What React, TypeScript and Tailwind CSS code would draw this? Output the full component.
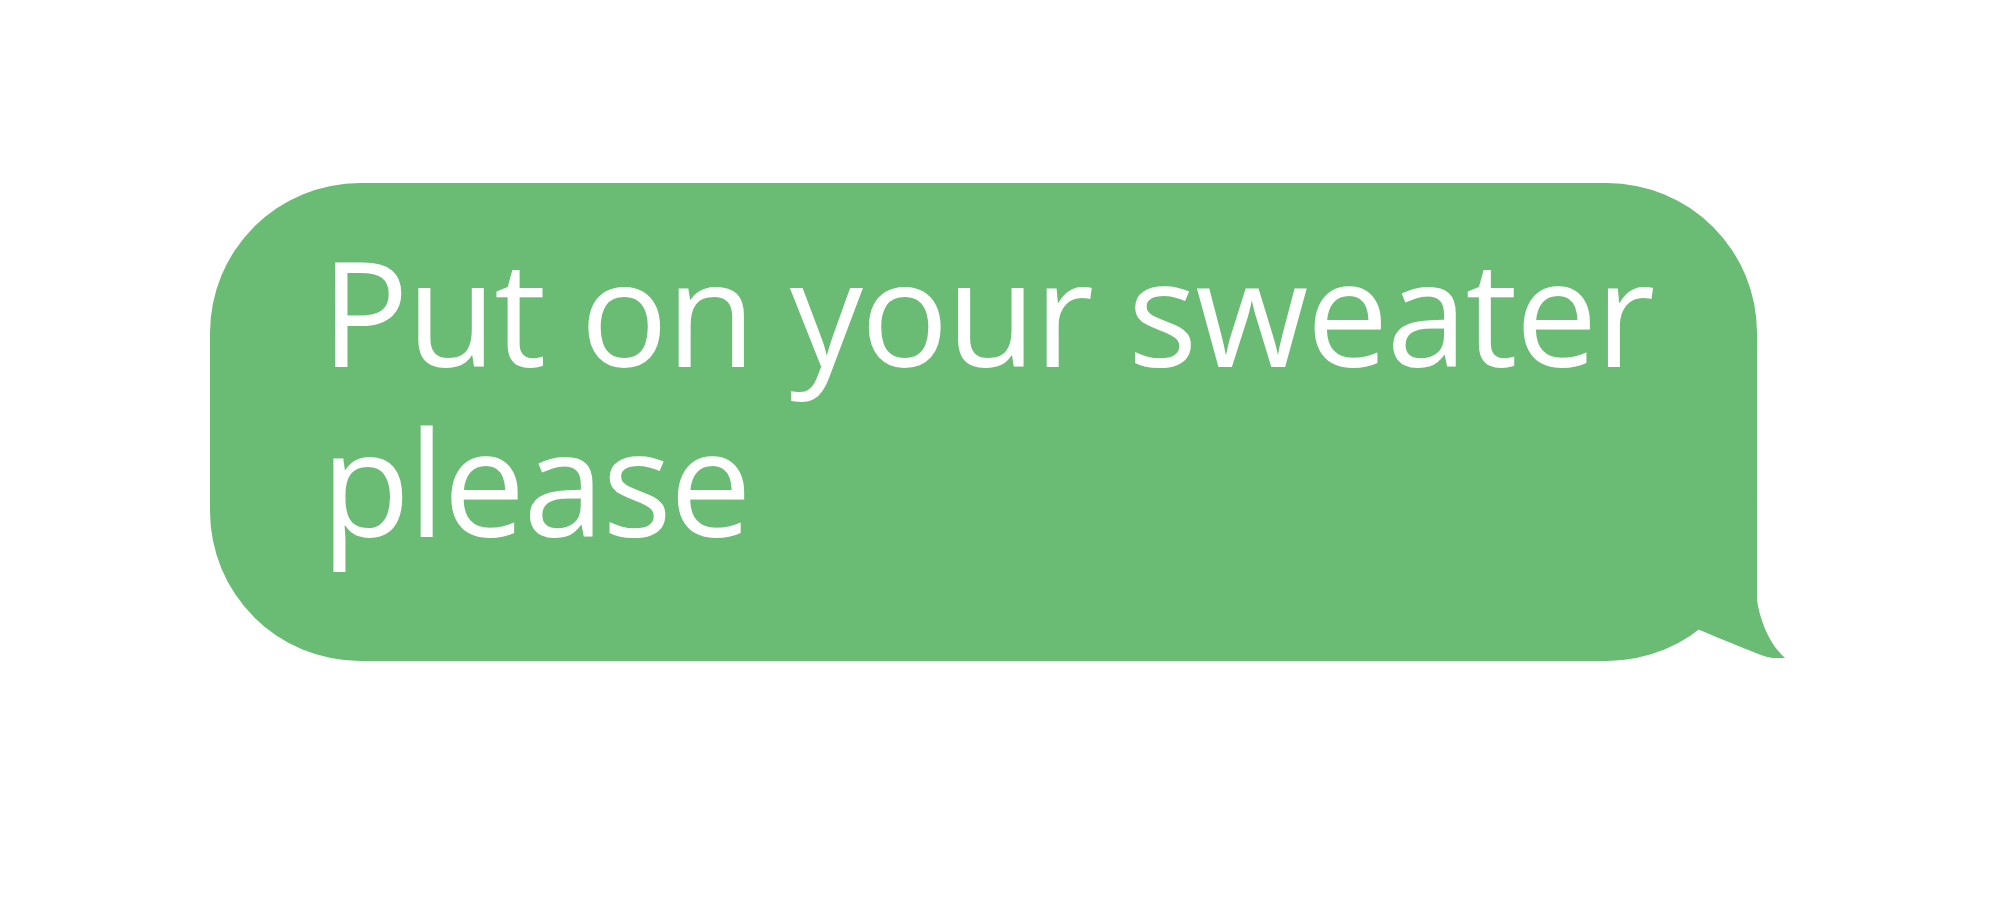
const BubbleTail = () => (
  <svg
    className="absolute left-[1400px] top-[300px] h-[200px] w-[200px]"
    viewBox="0 0 200 200"
    fill="#6abb74"
  >
    <path d="M10 37 L147 17 L147 117 C150 138 160 162 175 175 L163 175 C155 174 150 172 87 146 Z" />
  </svg>
);

export default function App() {
  return (
    <div className="min-h-[900px] bg-white pl-[210px] pt-[183px]">
      <div className="relative h-[478px] w-[1547px]">
        <div className="h-full w-full rounded-[150px] bg-[#6abb74] pl-[111px] pr-[80px] pt-[43px]">
          <p className="font-['Open_Sans',sans-serif] text-[146px] leading-[170px] tracking-[-2px] text-white">
            Put on your sweater
            <br />
            please
          </p>
        </div>
        <BubbleTail />
      </div>
    </div>
  );
}
